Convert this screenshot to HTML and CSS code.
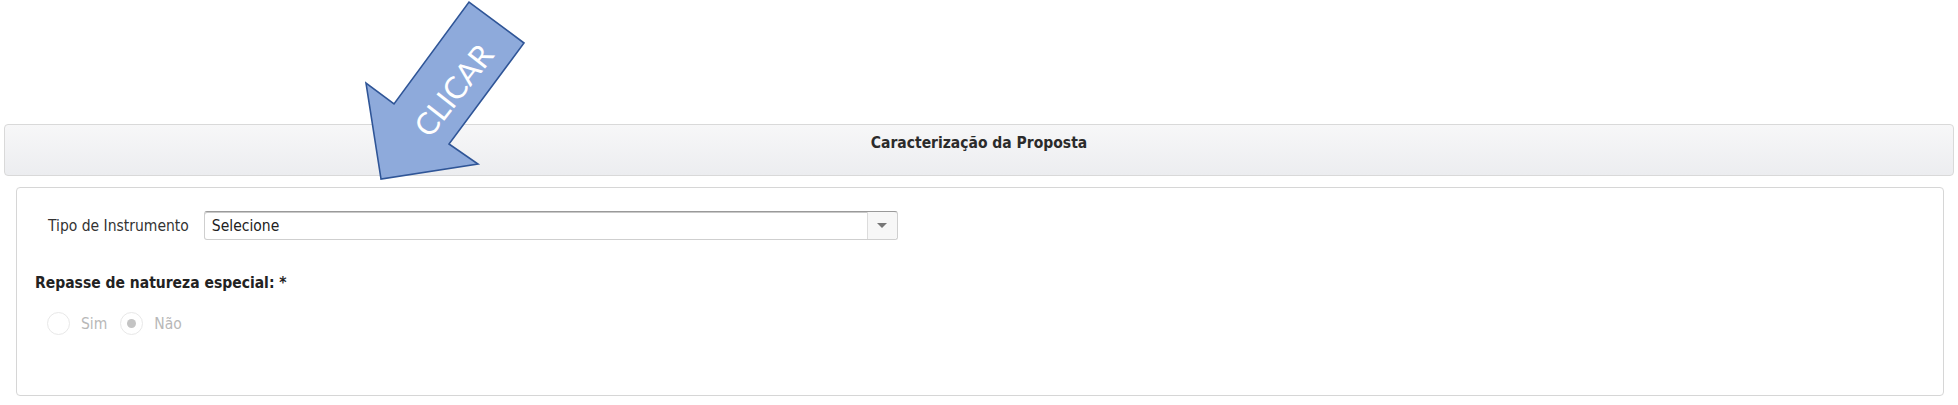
FILE: index.html
```html
<!DOCTYPE html>
<html lang="pt-BR">
<head>
<meta charset="utf-8">
<title>Caracterização da Proposta</title>
<link rel="stylesheet" href="styles.css">
</head>
<body>
<div class="page">
  <div class="header">Caracterização da Proposta</div>
  <div class="panel">
    <div class="field-row">
      <label class="field-label">Tipo de Instrumento</label>
      <div class="select">
        <span class="select-value">Selecione</span>
        <span class="select-btn"><span class="caret"></span></span>
      </div>
    </div>
    <div class="section-title">Repasse de natureza especial: *</div>
    <div class="radios">
      <span class="radio"></span><span class="radio-label">Sim</span>
      <span class="radio checked"></span><span class="radio-label">Não</span>
    </div>
  </div>
  <svg class="callout" width="600" height="200" viewBox="0 0 600 200" aria-hidden="true">
    <polygon points="381,179 366,83 394,104 469,2 524,43 449,144 478,164" fill="#8eaadb" stroke="#2f5597" stroke-width="1.6" stroke-linejoin="miter"/>
    <text x="0" y="0" transform="translate(453,90) rotate(-52)" text-anchor="middle" dominant-baseline="central" class="callout-text">CLICAR</text>
  </svg>
</div>
</body>
</html>
```

FILE: styles.css
```css
html, body {
  margin: 0;
  padding: 0;
  background: #ffffff;
}

body {
  font-family: "DejaVu Sans Condensed", "DejaVu Sans", sans-serif;
  color: #333;
}

.page {
  position: relative;
  width: 1958px;
  height: 405px;
  padding-top: 124px;
  box-sizing: border-box;
}

.header {
  margin-left: 4px;
  width: 1950px;
  height: 52px;
  box-sizing: border-box;
  border: 1px solid #d9d9d9;
  border-radius: 4px;
  background: linear-gradient(#f7f7f8, #ecedf0);
  padding-top: 9px;
  text-align: center;
  font-weight: bold;
  font-size: 15.5px;
  line-height: 18px;
  color: #2b2b2b;
}

.panel {
  margin-top: 11px;
  margin-left: 16px;
  width: 1928px;
  height: 209px;
  box-sizing: border-box;
  border: 1px solid #d6d6d6;
  border-radius: 4px;
  padding: 23px 18px 0 18px;
}

.field-row {
  display: flex;
  align-items: center;
  padding-left: 13px;
}

.field-label {
  font-size: 15.5px;
  color: #333;
  margin-right: 15px;
  padding-top: 1px;
}

.select {
  width: 694px;
  height: 29px;
  box-sizing: border-box;
  border: 1px solid #cfcfcf;
  border-top-color: #9a9a9a;
  border-radius: 3px;
  box-shadow: inset 0 1px 0 #c9c9c9;
  display: flex;
  align-items: stretch;
  background: #fff;
}

.select-value {
  flex: 1;
  display: flex;
  align-items: center;
  padding-left: 7px;
  padding-top: 1px;
  font-size: 15.5px;
  color: #222;
}

.select-btn {
  width: 29px;
  border-left: 1px solid #dcdcdc;
  background: #f7f7f7;
  display: flex;
  align-items: center;
  justify-content: center;
  border-radius: 0 3px 3px 0;
}

.caret {
  width: 0;
  height: 0;
  border-left: 5px solid transparent;
  border-right: 5px solid transparent;
  border-top: 5px solid #777;
}

.section-title {
  margin-top: 34px;
  font-weight: bold;
  font-size: 15.5px;
  line-height: 18px;
  color: #222;
}

.radios {
  margin-top: 20px;
  padding-left: 12px;
  display: flex;
  align-items: center;
}

.radio {
  width: 23px;
  height: 23px;
  box-sizing: border-box;
  border: 1px solid #e8e8e8;
  border-radius: 50%;
  background: #fff;
  display: flex;
  align-items: center;
  justify-content: center;
}

.radio.checked::after {
  content: "";
  width: 9px;
  height: 9px;
  border-radius: 50%;
  background: #c4c4c4;
}

.radio-label {
  font-size: 15.5px;
  color: #b8b8b8;
  margin-left: 11px;
  margin-right: 13px;
}

.callout {
  position: absolute;
  left: 0;
  top: 0;
  pointer-events: none;
}

.callout-text {
  font-family: "Lato", "Open Sans", sans-serif;
  font-size: 31px;
  fill: #ffffff;
}
```
